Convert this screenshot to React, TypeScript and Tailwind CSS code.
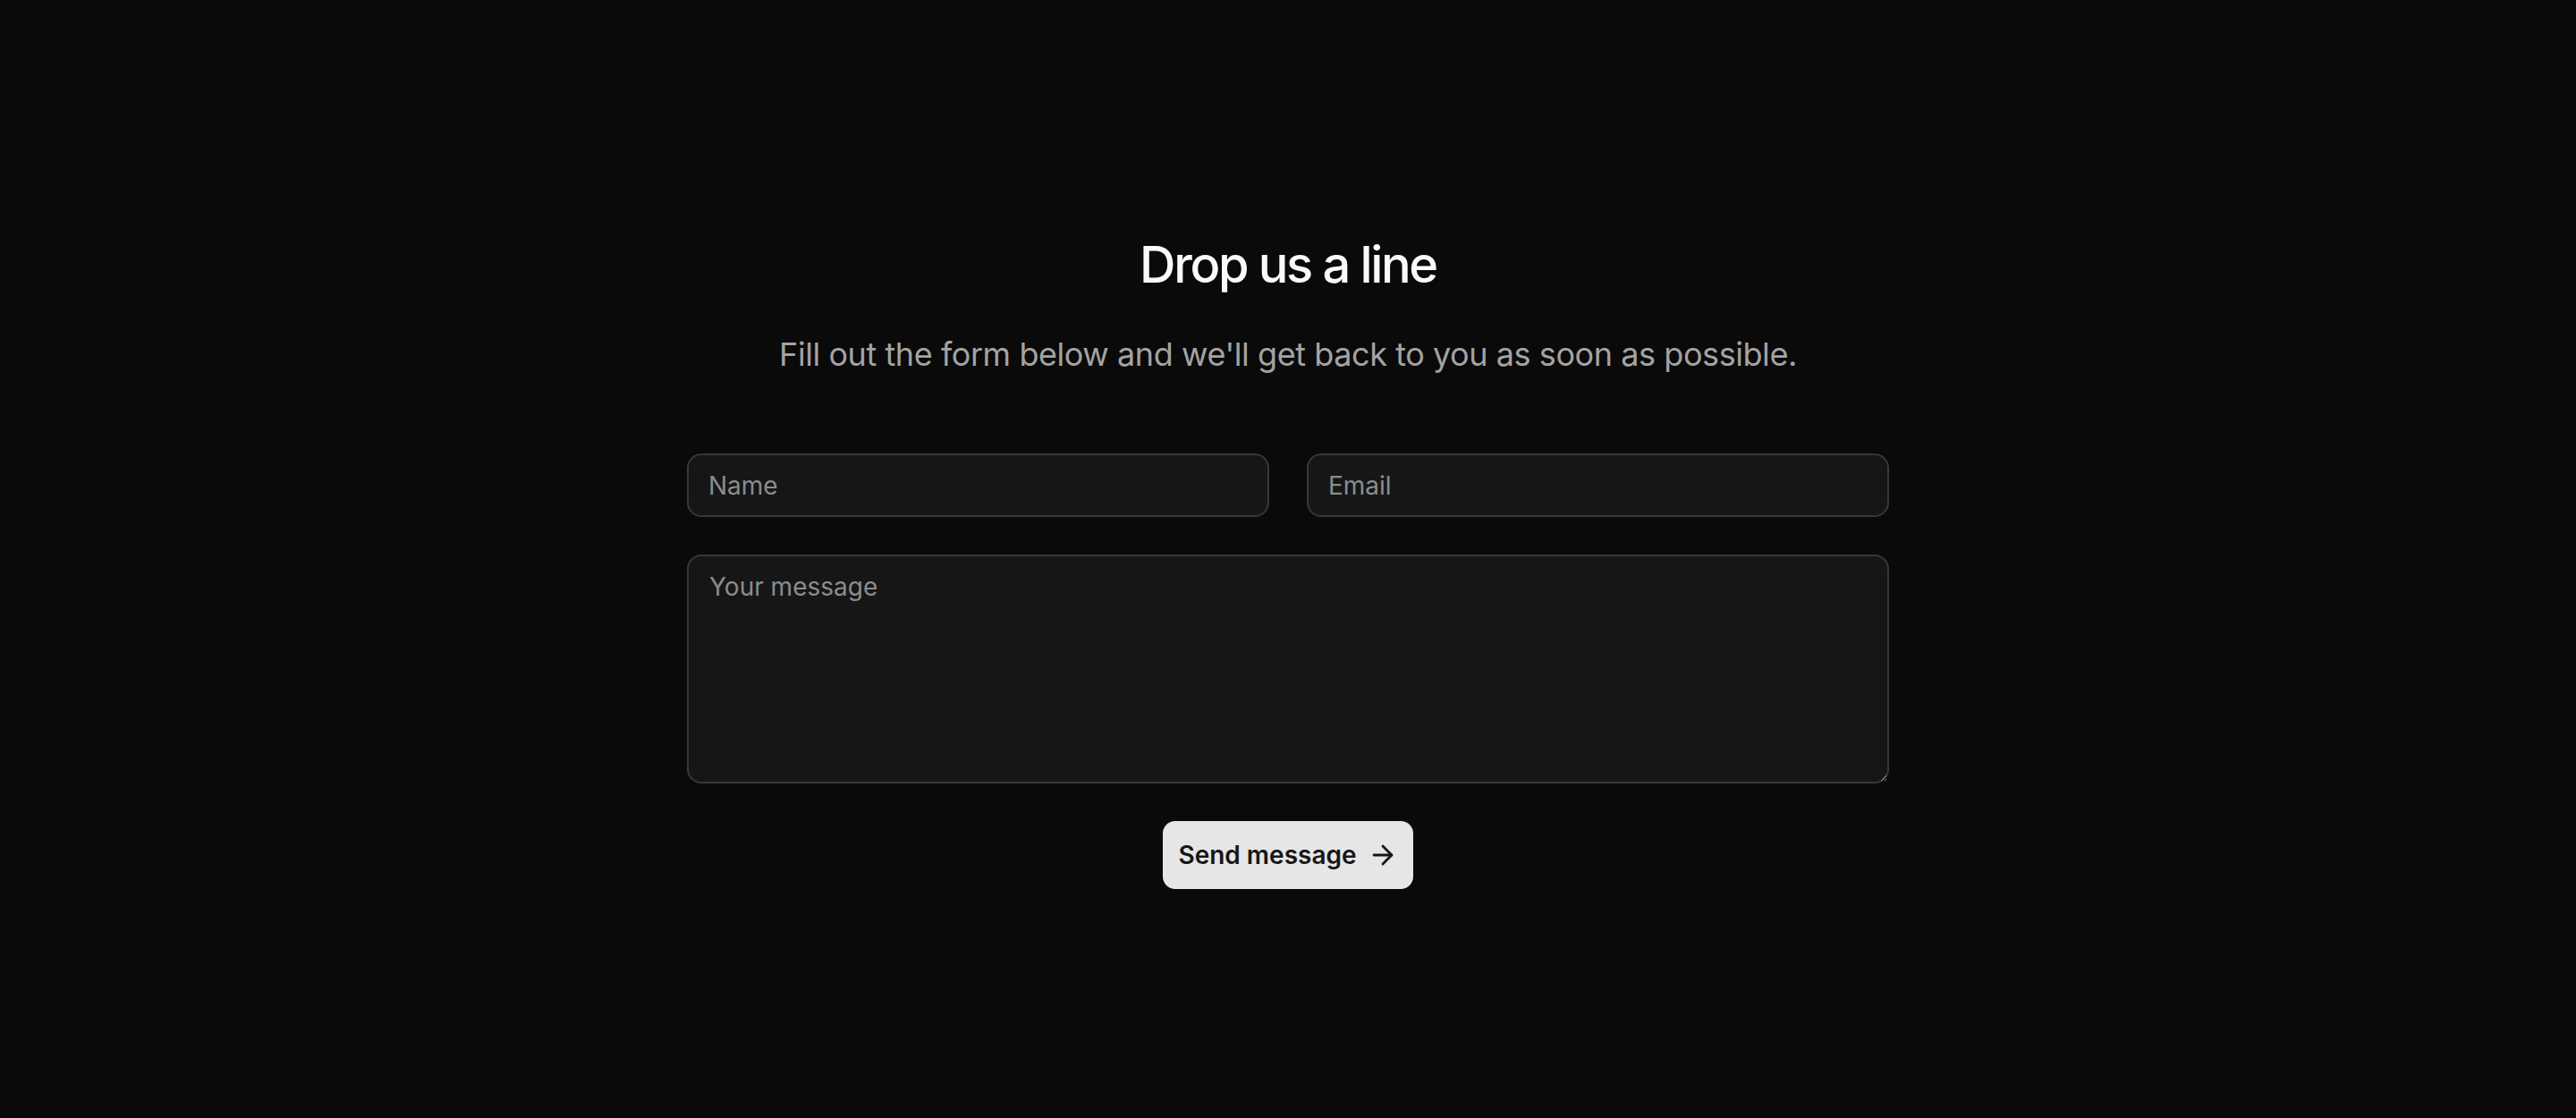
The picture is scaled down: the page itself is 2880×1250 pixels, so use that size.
import { ArrowRight } from "lucide-react";

export default function App() {
  return (
    <div
      className="h-[1250px] w-full bg-[#0a0a0a] flex flex-col items-center justify-center pt-[6px]"
      style={{ fontFamily: "Inter, 'Noto Sans', sans-serif" }}
    >
      <h1 className="text-[56px] leading-[68px] font-medium tracking-[-0.042em] text-[#fafafa]">
        Drop us a line
      </h1>
      <p className="mt-[41px] text-[36px] leading-[50px] text-[#a3a3a3] tracking-[-0.012em]">
        Fill out the form below and we'll get back to you as soon as possible.
      </p>
      <form
        className="mt-[86px] w-[1344px] flex flex-col"
        onSubmit={(e) => e.preventDefault()}
      >
        <div className="grid grid-cols-2 gap-[42px]">
          <input
            type="text"
            placeholder="Name"
            className="h-[71px] rounded-[16px] border-2 border-[#383838] bg-[#161616] px-[22px] text-[28px] text-[#e5e5e5] placeholder:text-[#8c8c8c] outline-none"
          />
          <input
            type="email"
            placeholder="Email"
            className="h-[71px] rounded-[16px] border-2 border-[#383838] bg-[#161616] px-[22px] text-[28px] text-[#e5e5e5] placeholder:text-[#8c8c8c] outline-none"
          />
        </div>
        <textarea
          placeholder="Your message"
          className="mt-[42px] h-[256px] rounded-[16px] border-2 border-[#383838] bg-[#161616] px-[23px] py-[14px] text-[28px] leading-[40px] text-[#e5e5e5] placeholder:text-[#8c8c8c] outline-none"
        />
        <div className="mt-[42px] flex justify-center">
          <button
            type="submit"
            className="h-[76px] w-[280px] rounded-[14px] bg-[#e6e6e6] flex items-center justify-center gap-[12px] text-[28px] font-semibold text-[#161616]"
          >
            <span>Send message</span>
            <ArrowRight size={34} strokeWidth={2} />
          </button>
        </div>
      </form>
    </div>
  );
}
